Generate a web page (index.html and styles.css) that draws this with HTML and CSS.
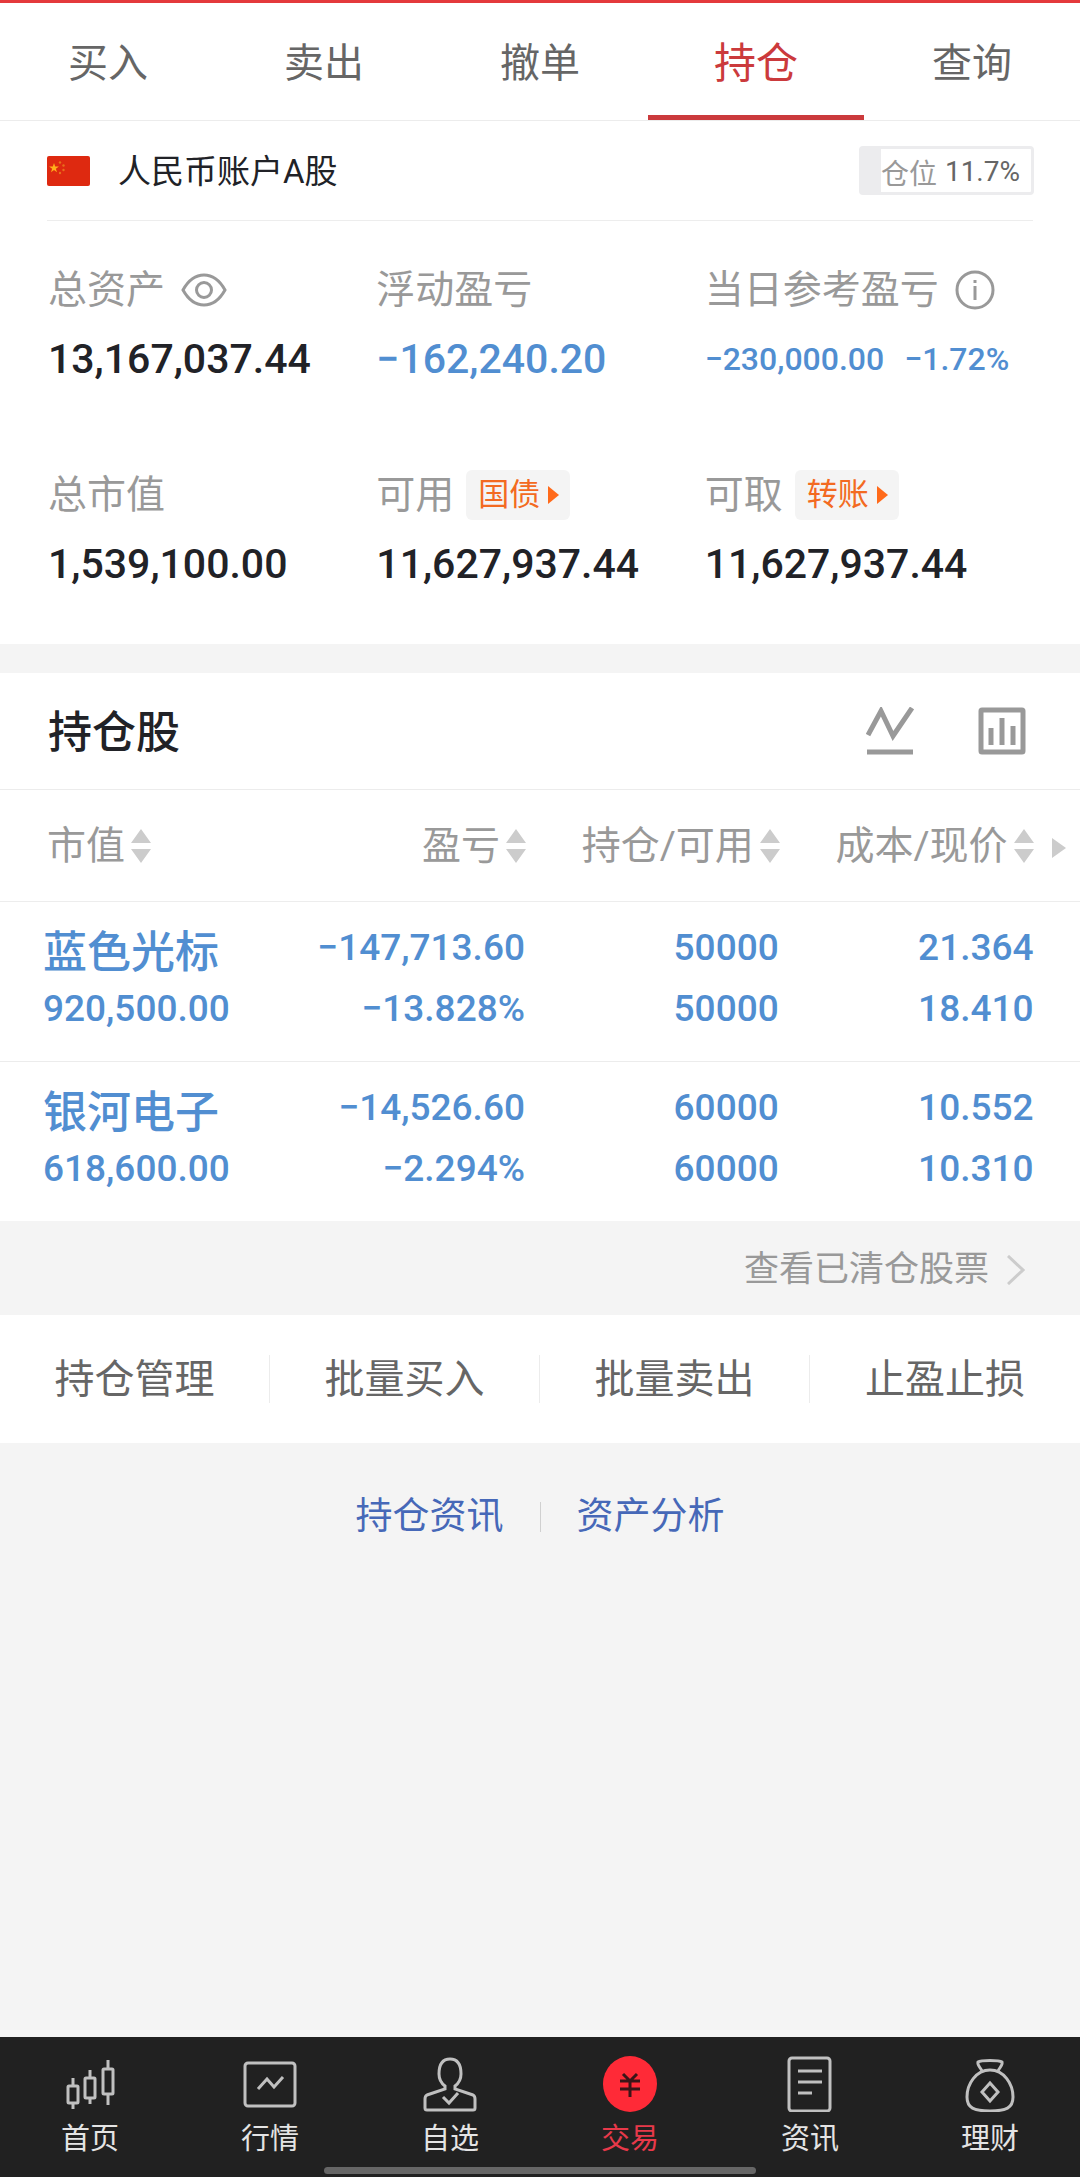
FILE: index.html
```html
<!DOCTYPE html>
<html lang="zh-CN">
<head>
<meta charset="utf-8">
<meta name="viewport" content="width=device-width, initial-scale=1">
<title>持仓</title>
<link rel="stylesheet" href="styles.css">
</head>
<body>
<div class="page">
  <nav class="tabs">
    <a class="tab" href="#buy">买入</a>
    <a class="tab" href="#sell">卖出</a>
    <a class="tab" href="#cancel">撤单</a>
    <a class="tab tab-active" href="#holdings">持仓</a>
    <a class="tab" href="#query">查询</a>
  </nav>

  <main>
    <section class="account">
      <svg class="flag" viewBox="0 0 43 30" aria-hidden="true">
        <rect width="43" height="30" rx="2" fill="#de2910"/>
        <path d="M7 7l1.200 3.500h3.700l-3 2.200 1.100 3.500L7 14l-3 2.200 1.100-3.500-3-2.200h3.700z" fill="#ffb01a"/>
        <g fill="#e8701c"><circle cx="13" cy="6.500" r="1.200"/><circle cx="16.500" cy="9.500" r="1.200"/><circle cx="16.500" cy="14" r="1.200"/><circle cx="13" cy="17" r="1.200"/></g>
      </svg>
      <h1 class="account-name">人民币账户A股</h1>
      <div class="position"><span class="position-label">仓位</span><span class="position-value">11.7%</span></div>
    </section>

    <section class="assets">
      <div class="asset">
        <div class="asset-label">总资产
          <button class="icon-button" type="button" aria-label="隐藏金额"><svg width="46" height="34" viewBox="0 0 46 34"><path d="M2 17C7 8 14 2 23 2S39 8 44 17C39 26 32 32 23 32S7 26 2 17z"/><circle cx="23" cy="17" r="7.500"/></svg></button>
        </div>
        <div class="asset-value">13,167,037.44</div>
      </div>
      <div class="asset">
        <div class="asset-label">浮动盈亏</div>
        <div class="asset-value down">−162,240.20</div>
      </div>
      <div class="asset">
        <div class="asset-label">当日参考盈亏
          <button class="icon-button" type="button" aria-label="说明"><svg width="40" height="40" viewBox="0 0 40 40"><circle cx="20" cy="20" r="18"/><path d="M20 16v14M20 10v3"/></svg></button>
        </div>
        <div class="asset-value asset-value-small down"><span>−230,000.00</span><span>−1.72%</span></div>
      </div>
      <div class="asset">
        <div class="asset-label">总市值</div>
        <div class="asset-value">1,539,100.00</div>
      </div>
      <div class="asset">
        <div class="asset-label">可用
          <button class="pill" type="button">国债<svg width="11" height="20" viewBox="0 0 11 20"><path d="M0 1l11 9-11 9z"/></svg></button>
        </div>
        <div class="asset-value">11,627,937.44</div>
      </div>
      <div class="asset">
        <div class="asset-label">可取
          <button class="pill" type="button">转账<svg width="11" height="20" viewBox="0 0 11 20"><path d="M0 1l11 9-11 9z"/></svg></button>
        </div>
        <div class="asset-value">11,627,937.44</div>
      </div>
    </section>

    <section class="holdings">
      <header class="holdings-head">
        <h2 class="holdings-title">持仓股</h2>
        <button class="icon-button thick" type="button" aria-label="走势"><svg width="48" height="48" viewBox="0 0 48 48"><path d="M2 28L15 4l12 25L46 1M1 45h46"/></svg></button>
        <button class="icon-button thick" type="button" aria-label="图表"><svg width="48" height="48" viewBox="0 0 48 48"><rect x="3" y="3" width="42" height="42" rx="1"/><path d="M13 21v17M24 11v27M35 19v19"/></svg></button>
      </header>
      <table class="stocks">
        <colgroup><col class="col-name"><col class="col-profit"><col class="col-data"><col class="col-data"><col class="col-more"></colgroup>
        <thead>
          <tr>
            <th scope="col"><button class="sort" type="button">市值<svg width="20" height="34" viewBox="0 0 20 34"><path d="M10 0l10 14H0zM0 20h20L10 34z"/></svg></button></th>
            <th scope="col"><button class="sort" type="button">盈亏<svg width="20" height="34" viewBox="0 0 20 34"><path d="M10 0l10 14H0zM0 20h20L10 34z"/></svg></button></th>
            <th scope="col"><button class="sort" type="button">持仓/可用<svg width="20" height="34" viewBox="0 0 20 34"><path d="M10 0l10 14H0zM0 20h20L10 34z"/></svg></button></th>
            <th scope="col"><button class="sort" type="button">成本/现价<svg width="20" height="34" viewBox="0 0 20 34"><path d="M10 0l10 14H0zM0 20h20L10 34z"/></svg></button></th>
            <td class="more"><button class="sort" type="button" aria-label="更多列"><svg width="14" height="20" viewBox="0 0 14 20"><path d="M0 0l14 10L0 20z"/></svg></button></td>
          </tr>
        </thead>
        <tbody>
          <tr>
            <td><div class="stock-name">蓝色光标</div><div>920,500.00</div></td>
            <td><div>−147,713.60</div><div>−13.828%</div></td>
            <td><div>50000</div><div>50000</div></td>
            <td><div>21.364</div><div>18.410</div></td>
            <td></td>
          </tr>
          <tr>
            <td><div class="stock-name">银河电子</div><div>618,600.00</div></td>
            <td><div>−14,526.60</div><div>−2.294%</div></td>
            <td><div>60000</div><div>60000</div></td>
            <td><div>10.552</div><div>10.310</div></td>
            <td></td>
          </tr>
        </tbody>
      </table>
    </section>

    <div class="cleared">
      <a class="cleared-link" href="#cleared">查看已清仓股票<svg width="18" height="30" viewBox="0 0 18 30"><path d="M1 1l15 14L1 29"/></svg></a>
    </div>

    <div class="actions">
      <button class="action" type="button">持仓管理</button>
      <button class="action" type="button">批量买入</button>
      <button class="action" type="button">批量卖出</button>
      <button class="action" type="button">止盈止损</button>
    </div>

    <div class="links">
      <a class="link" href="#news">持仓资讯</a>
      <a class="link" href="#analysis">资产分析</a>
    </div>
  </main>

  <footer class="bottom">
    <nav class="bottom-nav">
      <a class="nav-item" href="#home">
        <svg class="nav-icon" viewBox="0 0 54 56"><rect x="5" y="30" width="10" height="17" rx="1"/><rect x="22" y="22" width="10" height="20" rx="1"/><rect x="40" y="13" width="10" height="25" rx="1"/><path d="M10 22v8M10 47v6M27 14v8M27 42v6M45 4v9M45 38v11"/></svg>首页</a>
      <a class="nav-item" href="#market">
        <svg class="nav-icon" viewBox="0 0 54 56"><rect x="2" y="7" width="50" height="43" rx="3"/><path d="M15 33l9-10 7 8 9-10"/></svg>行情</a>
      <a class="nav-item" href="#watch">
        <svg class="nav-icon" viewBox="0 0 54 56"><path d="M22 30v3L4 39q-2 1-2 4v9q0 2 2 2h46q2 0 2-2v-9q0-3-2-4L32 33v-3c4-3 6-6 6-12C38 8 34 3 27 3S16 8 16 18c0 6 2 9 6 12z"/><path d="M20 41l6 6 9-10"/></svg>自选</a>
      <a class="nav-item nav-active" href="#trade">
        <svg class="nav-icon" viewBox="0 0 54 56"><ellipse cx="27" cy="28" rx="27" ry="28" fill="#ff2a37" stroke="none"/><path d="M20 18l7 7 7-7M17 25h20M17 33h20M27 25v16" stroke="#3a1518"/></svg>交易</a>
      <a class="nav-item" href="#info">
        <svg class="nav-icon" viewBox="0 0 54 56"><rect x="6" y="2" width="41" height="53" rx="3"/><path d="M15 15h24M15 26h24M15 37h14"/></svg>资讯</a>
      <a class="nav-item" href="#wealth">
        <svg class="nav-icon" viewBox="0 0 54 56"><path d="M19 15C17 11 14 9 15 6c3-2 21-2 24 0 1 3-2 5-4 9"/><path d="M27 14C13 14 4 28 4 41c0 11 7 14 23 14s23-3 23-14C50 28 41 14 27 14z"/><path d="M27 27l8 9-8 9-8-9z"/></svg>理财</a>
    </nav>
    <div class="home-bar"></div>
  </footer>
</div>
</body>
</html>
```
FILE: styles.css
```css
* { box-sizing: border-box; }

body {
  margin: 0;
  background: #f4f4f4;
  color: #212227;
  font-family: Roboto, "Noto Sans CJK SC", sans-serif;
  font-size: 38px;
}

a { color: inherit; text-decoration: none; }

button {
  margin: 0;
  padding: 0;
  border: 0;
  background: none;
  color: inherit;
  font: inherit;
  cursor: pointer;
}

svg { display: block; }

h1, h2 { margin: 0; }

.page {
  display: flex;
  flex-direction: column;
  min-height: 100vh;
  border-top: 3px solid #e4393c;
}

/* Trading tabs */
.tabs {
  display: grid;
  grid-template-columns: repeat(5, 1fr);
  background: #fff;
  border-bottom: 1px solid #ececec;
}

.tab {
  padding-top: 10px;
  border-bottom: 5px solid transparent;
  color: #666;
  font-size: 40px;
  line-height: 102px;
  text-align: center;
}

.tab-active {
  border-bottom-color: #cb3a3c;
  color: #cb3a3c;
  font-size: 42px;
}

/* Account row */
.account {
  display: flex;
  align-items: center;
  height: 99px;
  padding: 0 46px 0 47px;
  background: #fff;
}

.flag { width: 43px; height: 30px; }

.account-name {
  flex: 1;
  margin-left: 28px;
  padding-top: 2px;
  font-size: 33px;
  font-weight: 400;
  line-height: 48px;
}

.position {
  display: flex;
  align-items: center;
  gap: 8px;
  height: 49px;
  padding: 2px 11px 0 0;
  border: 3px solid #ececee;
  border-left-width: 22px;
  border-radius: 4px;
  font-size: 28px;
}

.position-label { color: #999; }
.position-value { color: #666; }

/* Asset summary */
.assets {
  display: grid;
  grid-template-columns: repeat(3, 1fr);
  row-gap: 86px;
  padding: 45px 47px 55px 48px;
  background: linear-gradient(#ededed, #ededed) 47px 0 / calc(100% - 94px) 1px no-repeat #fff;
}

.asset-label {
  display: flex;
  align-items: center;
  gap: 16px;
  height: 50px;
  color: #999;
  font-size: 39px;
  line-height: 50px;
  white-space: nowrap;
}

.asset-value {
  margin-top: 19px;
  font-size: 41px;
  font-weight: 500;
  line-height: 50px;
  white-space: nowrap;
}

.asset-value-small {
  display: flex;
  gap: 20px;
  font-size: 32px;
}

.down { color: #518ed1; }

.icon-button svg {
  fill: none;
  stroke: #999;
  stroke-width: 3;
}

.thick svg { stroke-width: 5; }

.pill {
  display: flex;
  align-items: center;
  gap: 8px;
  height: 50px;
  margin-left: -4px;
  padding: 0 11px 0 12px;
  border-radius: 6px;
  background: #f4f4f4;
  color: #f36a21;
  font-size: 31px;
}

.pill svg { fill: #ff6a1a; }

/* Holdings */
.holdings {
  margin-top: 29px;
  background: #fff;
}

.holdings-head {
  display: flex;
  align-items: center;
  gap: 64px;
  height: 117px;
  padding: 0 54px 0 48px;
  border-bottom: 1px solid #ececec;
}

.holdings-title {
  flex: 1;
  padding-top: 4px;
  font-size: 44px;
  font-weight: 500;
  line-height: 60px;
}

.stocks {
  width: 100%;
  table-layout: fixed;
  border-collapse: collapse;
  color: #518ed1;
  font-size: 37px;
  font-weight: 500;
  line-height: 61px;
  text-align: right;
  white-space: nowrap;
}

.col-name { width: 25%; }
.col-profit { width: 23.700%; }
.col-data { width: 23.500%; }

.stocks th,
.stocks td { padding: 0; }

.stocks thead tr {
  height: 111px;
  border-bottom: 1px solid #ededed;
  color: #999;
}

.stocks th {
  font-size: 39px;
  font-weight: 400;
}

.stocks th:first-child { padding-left: 47px; text-align: left; }

.sort {
  display: inline-flex;
  align-items: center;
  gap: 6px;
  vertical-align: middle;
}

.sort svg { fill: #ccc; }

.stocks .more { padding-left: 18px; text-align: left; }

.stocks tbody tr { height: 160px; }
.stocks tbody tr + tr { border-top: 1px solid #ececec; }

.stocks tbody td {
  padding-top: 15px;
  padding-right: 1px;
  vertical-align: top;
}

.stocks tbody td:first-child { padding-left: 43px; text-align: left; }
.stocks tbody td:nth-child(4) { padding-right: 0; }

.stock-name {
  padding-top: 12px;
  font-size: 44px;
  line-height: 49px;
}

/* Links below the list */
.cleared {
  display: flex;
  justify-content: flex-end;
  padding: 4px 55px 0;
}

.cleared-link {
  display: flex;
  align-items: center;
  gap: 18px;
  color: #999;
  font-size: 35px;
  line-height: 90px;
}

.cleared-link svg {
  fill: none;
  stroke: #ccc;
  stroke-width: 3;
}

.actions {
  display: grid;
  grid-template-columns: repeat(4, 1fr);
  padding: 40px 0;
  background: #fff;
}

.action {
  padding-top: 2px;
  border-right: 1px solid #ececec;
  color: #666;
  font-size: 40px;
  line-height: 46px;
}

.action:last-child { border-right: 0; }

.links {
  display: flex;
  justify-content: center;
  padding: 59px 0;
}

.link {
  padding: 0 36px;
  color: #4668b8;
  font-size: 37px;
  line-height: 30px;
}

.link + .link { border-left: 1px solid #d0d0d0; }

/* App navigation */
.bottom {
  margin-top: auto;
  padding: 19px 0 3px;
  background: #212121;
}

.bottom-nav {
  display: grid;
  grid-template-columns: repeat(6, 1fr);
}

.nav-item {
  display: flex;
  flex-direction: column;
  align-items: center;
  gap: 5px;
  color: #e4e4e4;
  font-size: 29px;
  line-height: 44px;
}

.nav-icon {
  width: 54px;
  height: 56px;
  fill: none;
  stroke: #c0c0c0;
  stroke-width: 3;
}

.nav-active { color: #e8394a; }

.home-bar {
  width: 40%;
  height: 7px;
  margin: 6px auto 0;
  border-radius: 4px;
  background: #666;
}
```
